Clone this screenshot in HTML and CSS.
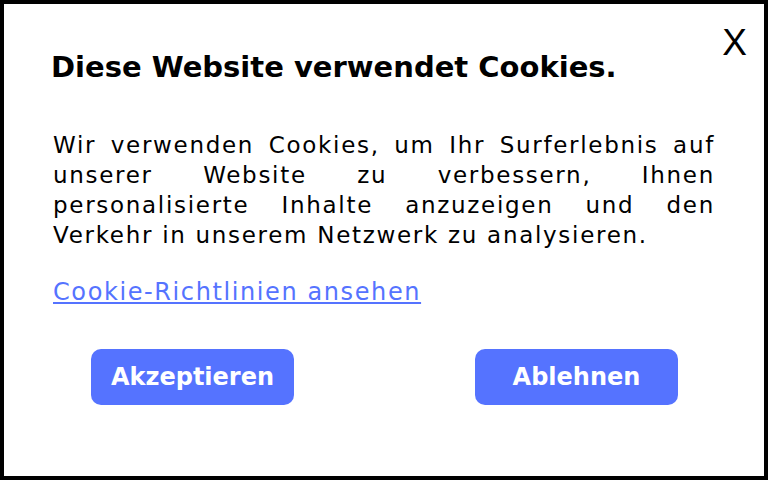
FILE: index.html
```html
<!DOCTYPE html>
<html lang="de">
<head>
<meta charset="UTF-8">
<meta name="viewport" content="width=device-width, initial-scale=1.0">
<title>Cookies</title>
<link rel="stylesheet" href="styles.css">
</head>
<body>

<div class="cookie-box">

<button class="close">X</button>

<div class="content">

<h2 class="title">Diese Website verwendet Cookies.</h2>

<p class="text">Wir verwenden Cookies, um Ihr Surferlebnis auf unserer Website zu verbessern, Ihnen personalisierte Inhalte anzuzeigen und den Verkehr in unserem Netzwerk zu analysieren.</p>

<a class="policy" href="#">Cookie-Richtlinien ansehen</a>

</div>

<div class="actions">

<button class="btn">Akzeptieren</button>

<button class="btn">Ablehnen</button>

</div>

</div>

</body>
</html>
```

FILE: styles.css
```css
*{
margin: 0;
padding: 0;
box-sizing: border-box;
}

body{
width: 768px;
height: 480px;
font-family: "DejaVu Sans", sans-serif;
color: #000;
background: #fff;
}

.cookie-box{
position: relative;
width: 768px;
height: 480px;
border: 4px solid #000;
background: #fff;
}

.close{
position: absolute;
top: 18px;
right: 17px;
border: none;
background: none;
font-family: "Liberation Sans", sans-serif;
font-size: 37px;
font-weight: 400;
color: #000;
cursor: pointer;
}

.content{
padding: 43px 49px 0 49px;
}

.title{
margin-left: -2px;
font-size: 29px;
font-weight: 700;
line-height: 40px;
}

.text{
margin-top: 43px;
font-size: 23px;
line-height: 30px;
letter-spacing: 1.7px;
text-align: justify;
}

.policy{
display: inline-block;
margin-top: 28px;
font-size: 24px;
letter-spacing: 1.6px;
color: #5573ff;
text-decoration: underline;
}

.actions{
display: flex;
justify-content: space-between;
margin-top: 43px;
padding: 0 86px 0 87px;
}

.btn{
width: 203px;
height: 56px;
border: none;
border-radius: 10px;
background: #5573ff;
color: #fff;
font-family: "DejaVu Sans", sans-serif;
font-size: 24px;
font-weight: 700;
cursor: pointer;
}
```
